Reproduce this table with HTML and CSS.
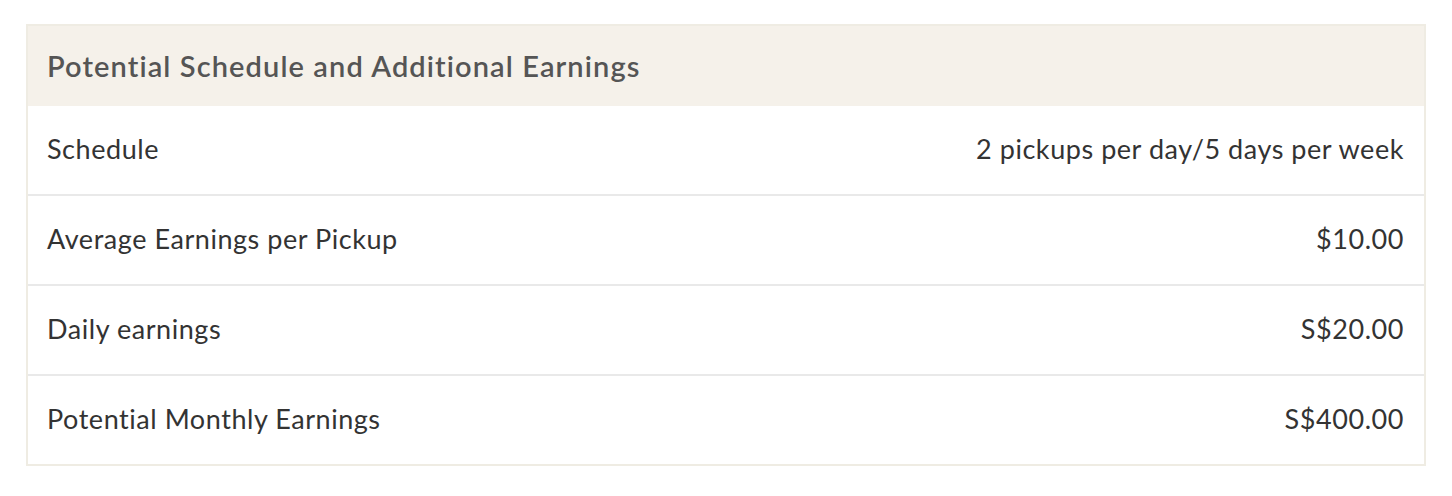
FILE: index.html
```html
<!DOCTYPE html>
<html>
<head>
<meta charset="utf-8">
<link rel="stylesheet" href="styles.css">
</head>
<body>
<div class="card">
  <div class="card-head">Potential Schedule and Additional Earnings</div>
  <div class="row"><span>Schedule</span><span>2 pickups per day/5 days per week</span></div>
  <div class="row"><span>Average Earnings per Pickup</span><span>$10.00</span></div>
  <div class="row"><span>Daily earnings</span><span>S$20.00</span></div>
  <div class="row"><span>Potential Monthly Earnings</span><span>S$400.00</span></div>
</div>
</body>
</html>
```
FILE: styles.css
```css
html, body { margin: 0; padding: 0; background: #fff; }
body { padding: 24px 26px; font-family: Lato, "Open Sans", sans-serif; }
.card {
  width: 1400px;
  box-sizing: border-box;
  border: 2px solid #efece3;
}
.card-head {
  height: 80px;
  box-sizing: border-box;
  background: #f5f1ea;
  color: #555;
  font-weight: 600;
  font-size: 29px;
  letter-spacing: 1.1px;
  display: flex;
  align-items: center;
  padding: 0 19px 1px;
}
.row {
  height: 88px;
  box-sizing: border-box;
  display: flex;
  align-items: center;
  justify-content: space-between;
  padding: 0 20px 3px 19px;
  font-size: 27px;
  letter-spacing: 0.55px;
  color: #333;
}
.row + .row { height: 90px; border-top: 2px solid #e9e9e9; }
```
